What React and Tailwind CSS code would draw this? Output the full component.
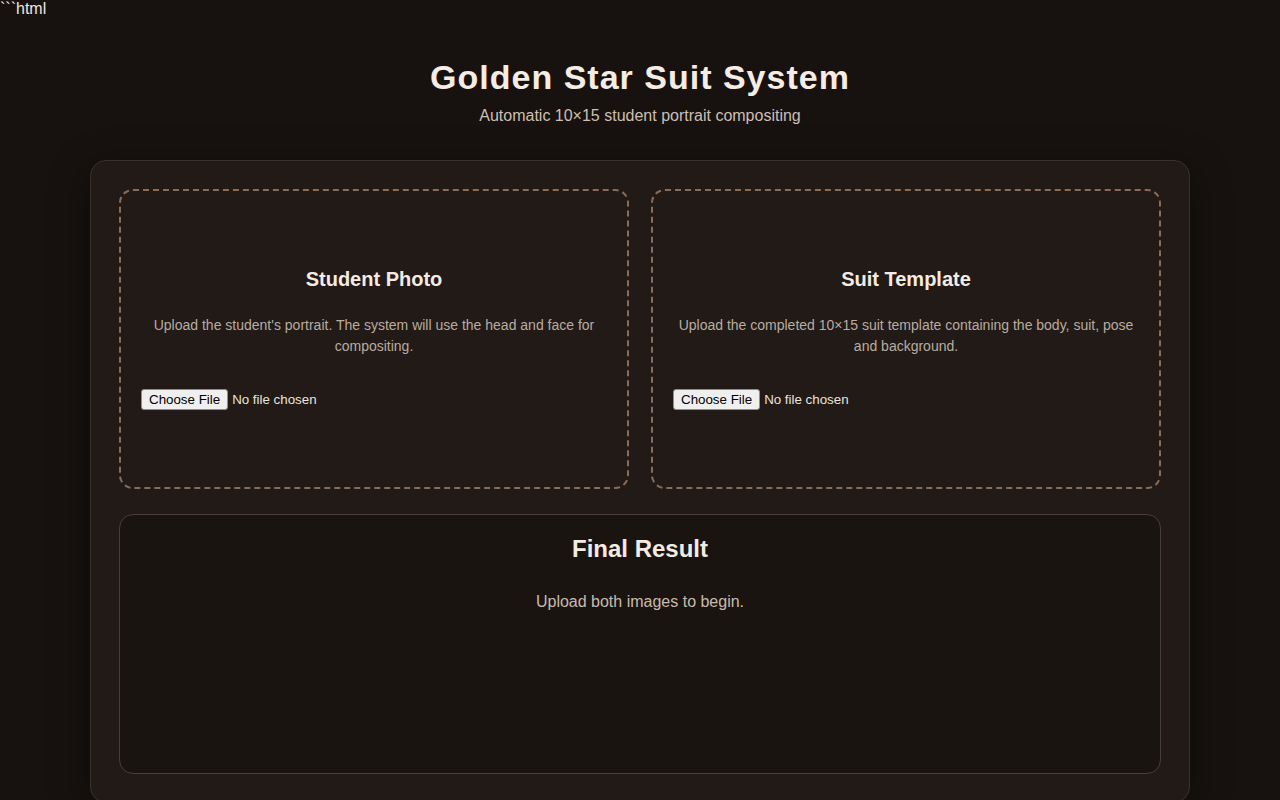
import React from 'react';

const UploadBox = ({ title, text }) => (
  <div className="flex h-[300px] flex-col justify-center rounded-[14px] border-2 border-dashed border-[#8a6c58] bg-[#211a16] px-5 pb-[2px] text-center">
    <h2 className="text-[20px] font-bold leading-[24px] text-[#f4ebe3]">{title}</h2>
    <p className="mt-[24px] text-[14px] leading-[21px] text-[#b9aca0]">{text}</p>
    <div className="mt-[32px] flex items-center text-[13.33px] leading-[15px] text-[#ece4dc]">
      <span className="rounded-[3px] border border-[#8f8f8f] bg-[#efefef] px-[7px] py-[2px] text-black">
        Choose File
      </span>
      <span className="ml-[4px]">No file chosen</span>
    </div>
  </div>
);

export default function App() {
  return (
    <div className="min-h-screen overflow-hidden bg-[#17120f] font-['Liberation_Sans',Arial,sans-serif] text-[#efe6dd]">
      <div className="text-[16px] leading-[17px]">```html</div>

      <header className="pt-[39px] text-center">
        <h1 className="text-[34px] font-bold leading-[42px] tracking-[1px] text-[#f5ece4]">
          Golden Star Suit System
        </h1>
        <p className="mt-[8px] text-[16px] leading-[20px] text-[#cdbfb3]">
          Automatic 10×15 student portrait compositing
        </p>
      </header>

      <main className="mx-auto mt-[34px] w-[1100px] rounded-[16px] border border-[#3b312b] bg-[#211a16] p-[28px] shadow-[0_10px_40px_rgba(0,0,0,0.45)]">
        <div className="grid grid-cols-2 gap-[22px]">
          <UploadBox
            title="Student Photo"
            text="Upload the student's portrait. The system will use the head and face for compositing."
          />
          <UploadBox
            title="Suit Template"
            text="Upload the completed 10×15 suit template containing the body, suit, pose and background."
          />
        </div>

        <section className="mt-[25px] h-[260px] rounded-[14px] border border-[#4a3f37] bg-[#1a1411] pt-[19px] text-center">
          <h2 className="text-[24px] font-bold leading-[29px] text-[#f4ebe3]">Final Result</h2>
          <p className="mt-[29px] text-[16px] leading-[20px] text-[#c9bbae]">Upload both images to begin.</p>
        </section>
      </main>
    </div>
  );
}
